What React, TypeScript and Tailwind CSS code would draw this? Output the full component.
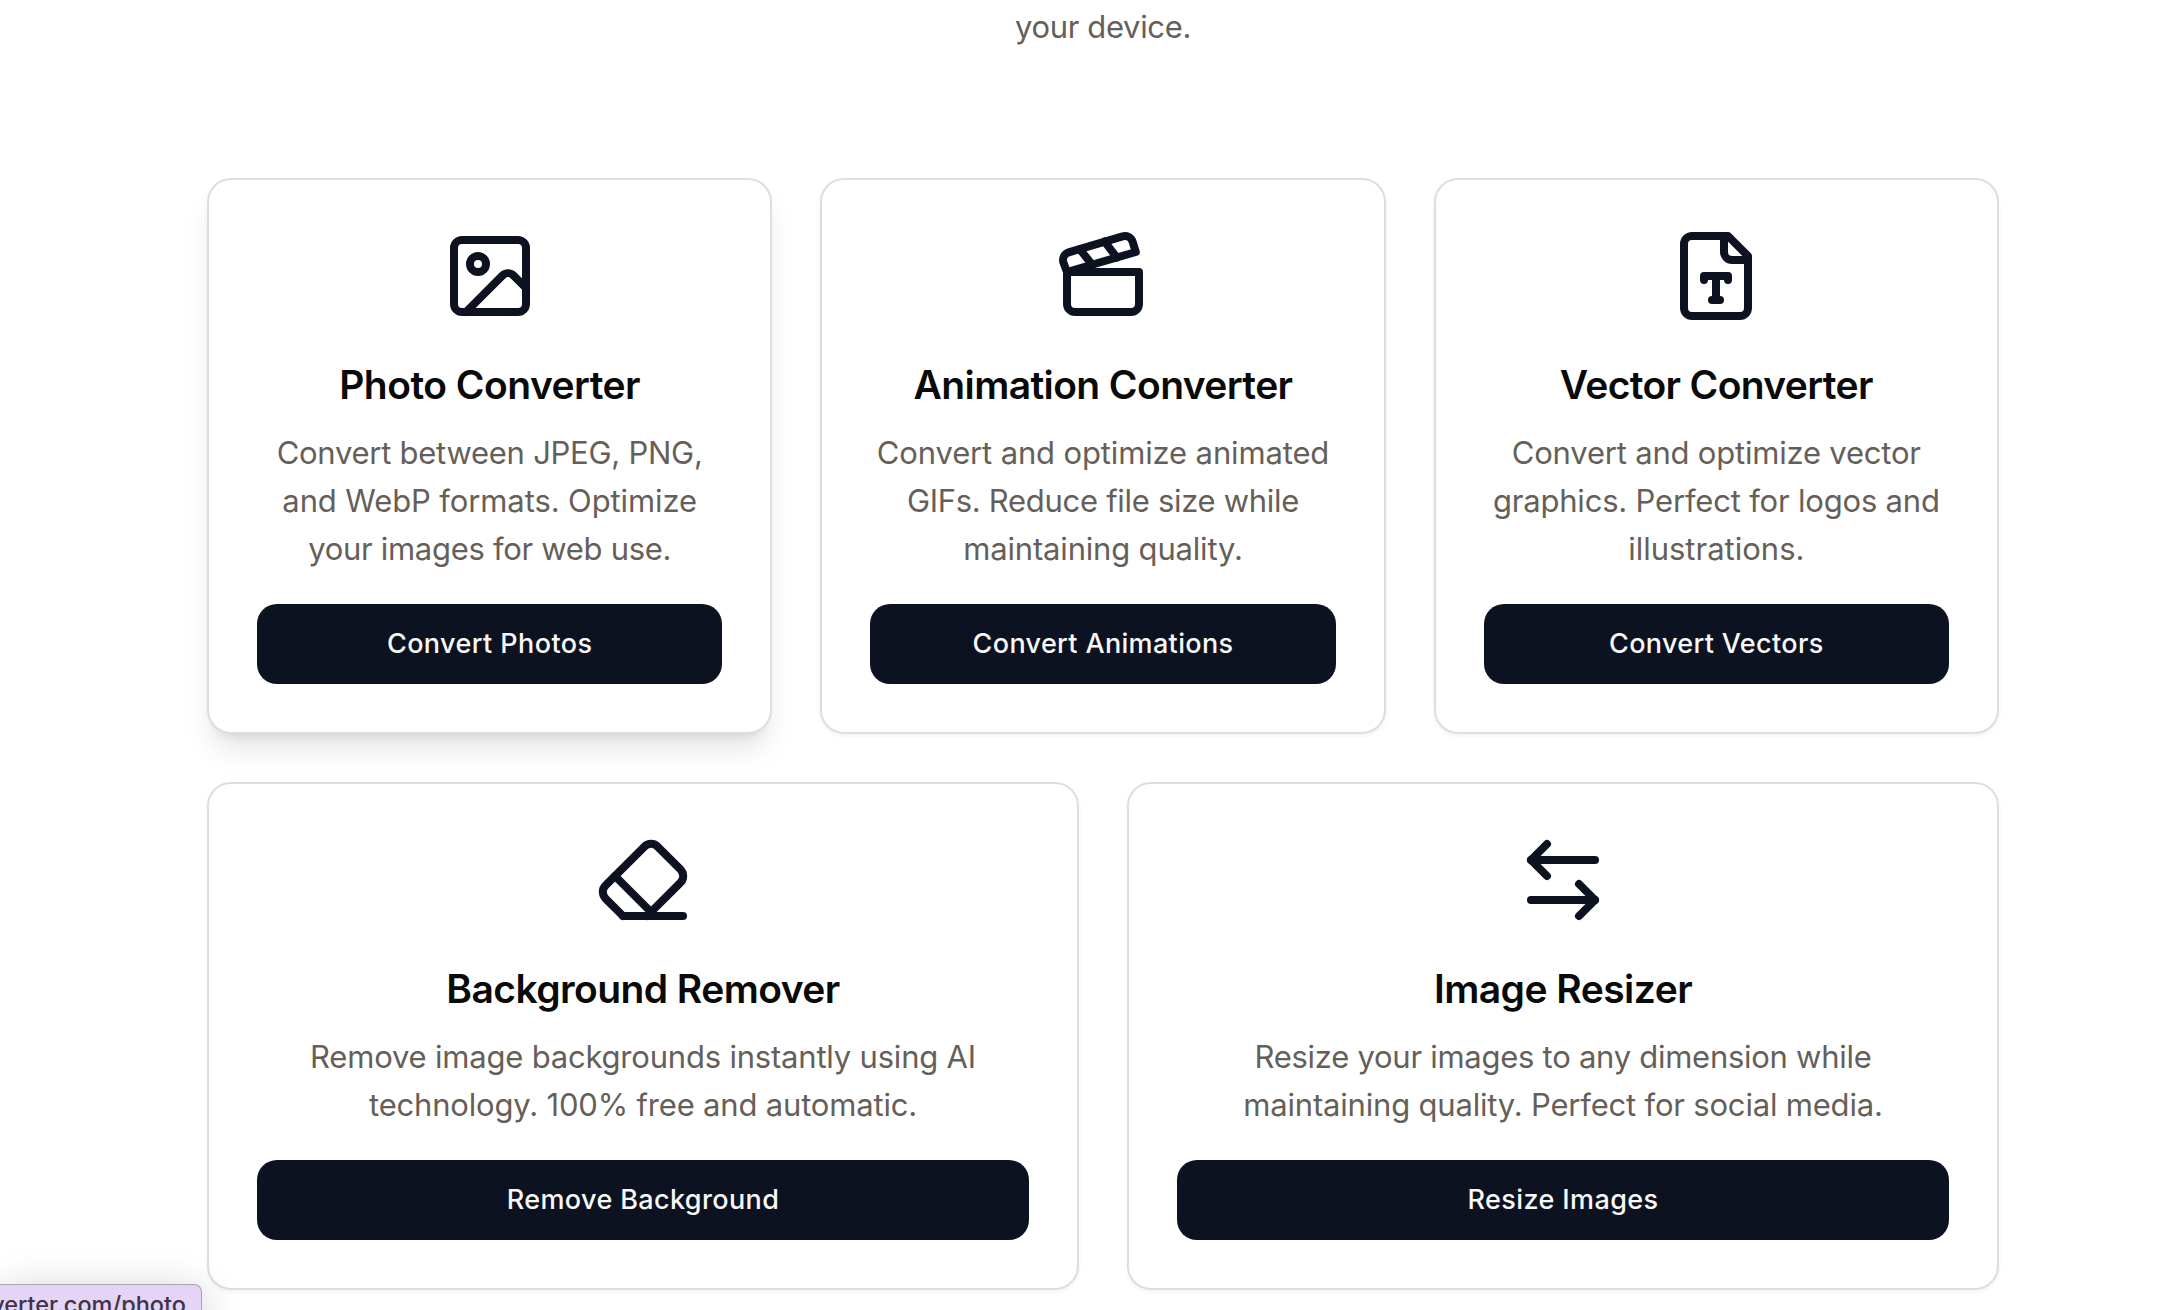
import type { ReactNode } from "react";

type Line = { text: string; tracking: string };

type Tool = {
  title: string;
  titleTracking: string;
  lines: Line[];
  action: string;
  actionTracking: string;
  icon: ReactNode;
  raised?: boolean;
};

const converters: Tool[] = [
  {
    title: "Photo Converter",
    titleTracking: "tracking-[-0.53px]",
    lines: [
      { text: "Convert between JPEG, PNG,", tracking: "tracking-[-0.26px]" },
      { text: "and WebP formats. Optimize", tracking: "tracking-[-0.11px]" },
      { text: "your images for web use.", tracking: "tracking-[-0.3px]" },
    ],
    action: "Convert Photos",
    actionTracking: "tracking-[0.41px]",
    raised: true,
    icon: (
      <>
        <rect width="18" height="18" x="3" y="3" rx="2" ry="2" />
        <circle cx="9" cy="9" r="2" />
        <path d="m21 15-3.086-3.086a2 2 0 0 0-2.828 0L6 21" />
      </>
    ),
  },
  {
    title: "Animation Converter",
    titleTracking: "tracking-[-0.6px]",
    lines: [
      { text: "Convert and optimize animated", tracking: "tracking-[-0.14px]" },
      { text: "GIFs. Reduce file size while", tracking: "tracking-[-0.3px]" },
      { text: "maintaining quality.", tracking: "tracking-[-0.18px]" },
    ],
    action: "Convert Animations",
    actionTracking: "tracking-[0.34px]",
    icon: (
      <>
        <path d="M20.2 6 3 11l-.9-2.4c-.3-1.1.3-2.2 1.3-2.5l13.5-4c1.1-.3 2.2.3 2.5 1.3Z" />
        <path d="m6.2 5.3 3.1 3.9" />
        <path d="m12.4 3.4 3.1 4" />
        <path d="M3 11h18v8a2 2 0 0 1-2 2H5a2 2 0 0 1-2-2Z" />
      </>
    ),
  },
  {
    title: "Vector Converter",
    titleTracking: "tracking-[-0.65px]",
    lines: [
      { text: "Convert and optimize vector", tracking: "tracking-[-0.2px]" },
      { text: "graphics. Perfect for logos and", tracking: "tracking-[-0.19px]" },
      { text: "illustrations.", tracking: "tracking-[0px]" },
    ],
    action: "Convert Vectors",
    actionTracking: "tracking-[0.34px]",
    icon: (
      <>
        <path d="M15 2H6a2 2 0 0 0-2 2v16a2 2 0 0 0 2 2h12a2 2 0 0 0 2-2V7Z" />
        <path d="M14 2v4a2 2 0 0 0 2 2h4" />
        <path d="M9 13v-1h6v1" />
        <path d="M12 12v6" />
        <path d="M11 18h2" />
      </>
    ),
  },
];

const editors: Tool[] = [
  {
    title: "Background Remover",
    titleTracking: "tracking-[-0.57px]",
    lines: [
      { text: "Remove image backgrounds instantly using AI", tracking: "tracking-[-0.2px]" },
      { text: "technology. 100% free and automatic.", tracking: "tracking-[-0.18px]" },
    ],
    action: "Remove Background",
    actionTracking: "tracking-[0.38px]",
    icon: (
      <>
        <path d="m7 21-4.3-4.3c-1-1-1-2.5 0-3.4l9.6-9.6c1-1 2.5-1 3.4 0l5.6 5.6c1 1 1 2.5 0 3.4L13 21" />
        <path d="M22 21H7" />
        <path d="m5 11 9 9" />
      </>
    ),
  },
  {
    title: "Image Resizer",
    titleTracking: "tracking-[-0.53px]",
    lines: [
      { text: "Resize your images to any dimension while", tracking: "tracking-[-0.27px]" },
      { text: "maintaining quality. Perfect for social media.", tracking: "tracking-[-0.19px]" },
    ],
    action: "Resize Images",
    actionTracking: "tracking-[0.4px]",
    icon: (
      <>
        <path d="M8 3 4 7l4 4" />
        <path d="M4 7h16" />
        <path d="m16 21 4-4-4-4" />
        <path d="M20 17H4" />
      </>
    ),
  },
];

function ToolCard({ tool }: { tool: Tool }) {
  const shadow = tool.raised
    ? "shadow-[0_20px_30px_-6px_rgba(0,0,0,0.11),0_8px_12px_-8px_rgba(0,0,0,0.12)]"
    : "shadow-[0_2px_4px_0_rgba(0,0,0,0.05)]";
  return (
    <article
      className={`flex flex-col items-center rounded-3xl border-2 border-[#dedede] bg-white p-12 text-center ${shadow}`}
    >
      <svg
        viewBox="0 0 24 24"
        fill="none"
        stroke="currentColor"
        strokeWidth="2"
        strokeLinecap="round"
        strokeLinejoin="round"
        className="size-24 shrink-0 text-[#0c121f]"
      >
        {tool.icon}
      </svg>
      <h3
        className={`mt-[33px] text-[39px] leading-[56px] font-semibold whitespace-nowrap text-[#0a0a0a] ${tool.titleTracking}`}
      >
        {tool.title}
      </h3>
      <p className="mt-4 text-[31px] leading-[48px] whitespace-nowrap text-[#665f59]">
        {tool.lines.map((line) => (
          <span key={line.text} className={`block ${line.tracking}`}>
            {line.text}
          </span>
        ))}
      </p>
      <button
        className={`mt-[31px] flex h-20 w-full items-center justify-center rounded-[20px] bg-[#0c121f] text-[27px] font-[450] text-[#f8f8f8] ${tool.actionTracking}`}
      >
        {tool.action}
      </button>
    </article>
  );
}

export default function App() {
  return (
    <div className="relative h-[1310px] w-full overflow-hidden bg-white font-['Inter',sans-serif]">
      <main className="w-[2206px]">
        <div className="mx-auto w-[1792px]">
          <p className="pt-[3px] pb-[127px] text-center text-[31px] leading-[48px] tracking-[-0.35px] text-[#665f59]">
            your device.
          </p>
          <div className="flex flex-col gap-12">
            <section className="grid grid-cols-3 gap-12">
              {converters.map((tool) => (
                <ToolCard key={tool.title} tool={tool} />
              ))}
            </section>
            <section className="grid grid-cols-2 gap-12">
              {editors.map((tool) => (
                <ToolCard key={tool.title} tool={tool} />
              ))}
            </section>
          </div>
        </div>
      </main>

      {/* Link address bubble in the window's lower left corner */}
      <div className="absolute top-[1284px] left-0 flex h-11 w-[202px] justify-end overflow-visible rounded-tr-[8px] border-t border-r border-[#a9a4a9] bg-[#e4d4f5] pr-[15px] text-[23.5px] leading-[40px] text-[#3f3348] shadow-[0_8px_40px_rgba(0,0,0,0.22)]">
        <span className="font-medium whitespace-nowrap">verter.com/photo</span>
      </div>
    </div>
  );
}
